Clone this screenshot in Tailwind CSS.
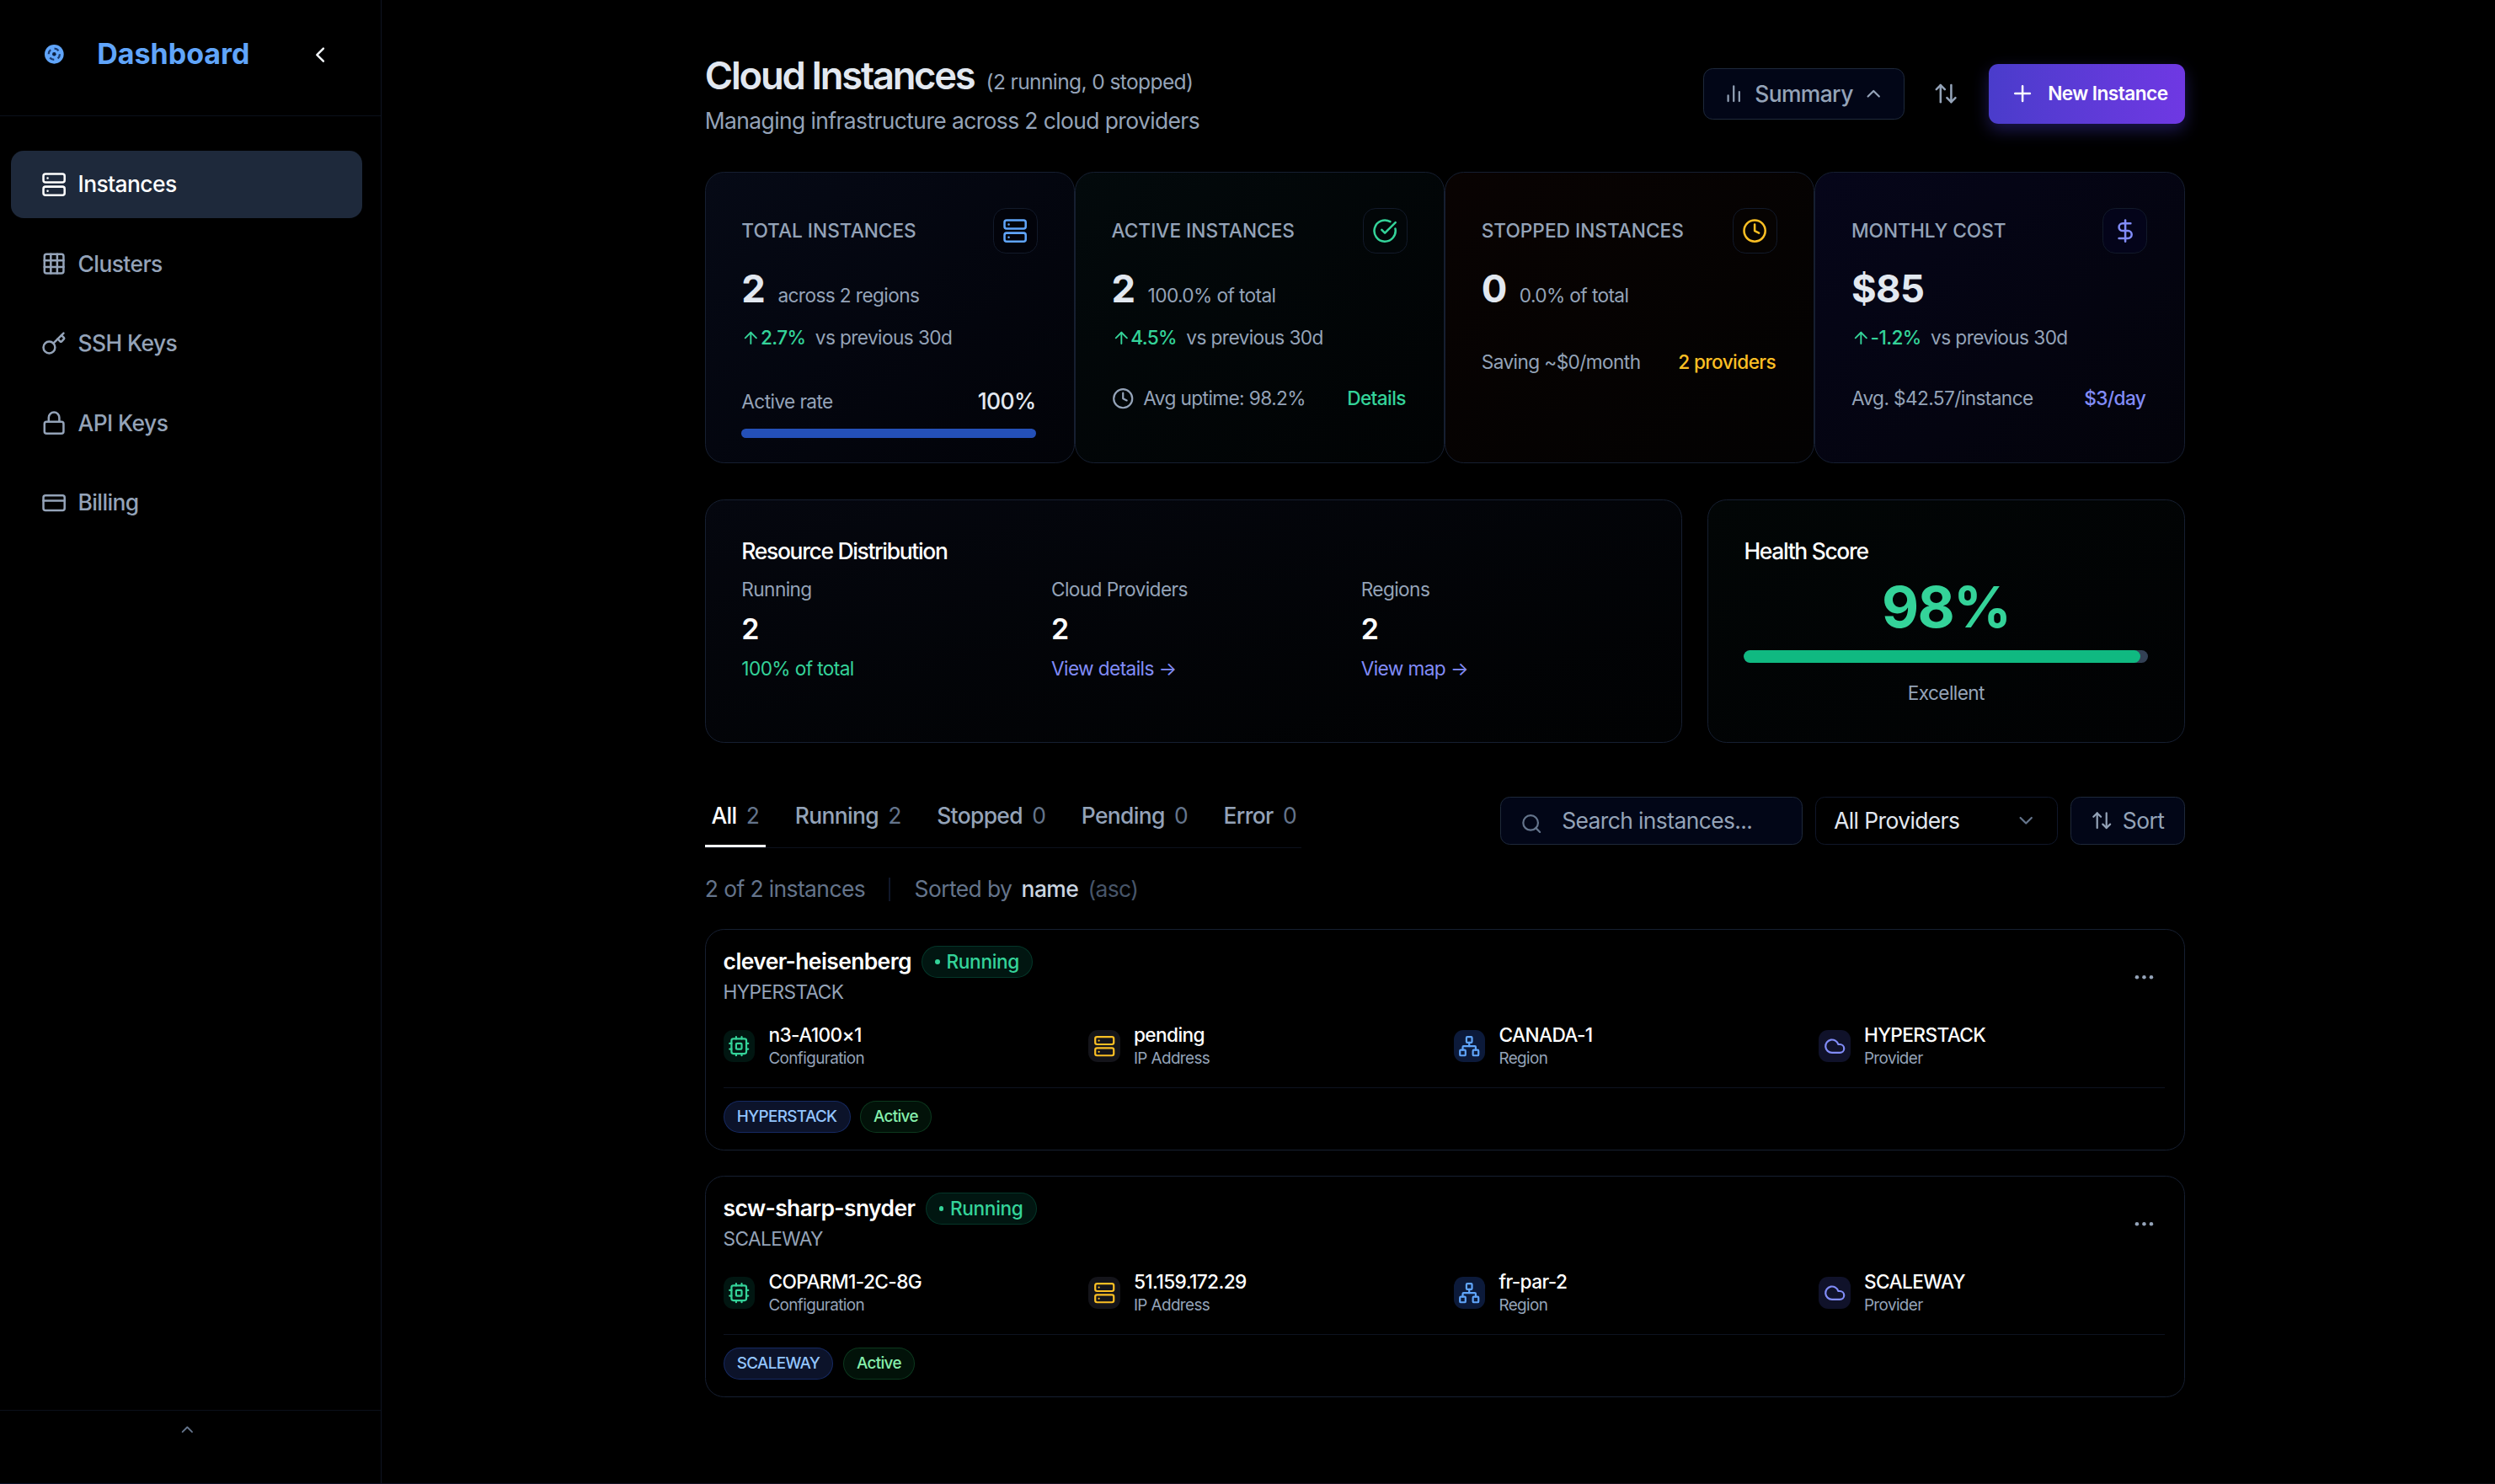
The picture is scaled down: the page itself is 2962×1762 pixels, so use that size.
<!DOCTYPE html>
<html lang="en">

<head>
    <meta charset="UTF-8">
    <title>Cloud Instances</title>
    <script src="https://cdn.jsdelivr.net/npm/@tailwindcss/browser@4"></script>
</head>

<body class="bg-black overflow-hidden">
    <!-- icon sprite -->
    <svg class="hidden">
        <defs>
            <symbol id="i-server" viewBox="0 0 24 24"><rect width="20" height="8" x="2" y="2" rx="2"/><rect width="20" height="8" x="2" y="14" rx="2"/><path d="M6 6h.01M6 18h.01"/></symbol>
            <symbol id="i-grid" viewBox="0 0 24 24"><rect width="18" height="18" x="3" y="3" rx="2"/><path d="M3 9h18M3 15h18M9 3v18M15 3v18"/></symbol>
            <symbol id="i-key" viewBox="0 0 24 24"><path d="m15.5 7.5 2.3 2.3a1 1 0 0 0 1.4 0l2.1-2.1a1 1 0 0 0 0-1.4L19 4"/><path d="m21 2-9.6 9.6"/><circle cx="7.5" cy="15.5" r="5.5"/></symbol>
            <symbol id="i-lock" viewBox="0 0 24 24"><rect width="18" height="11" x="3" y="11" rx="2"/><path d="M7 11V7a5 5 0 0 1 10 0v4"/></symbol>
            <symbol id="i-card" viewBox="0 0 24 24"><rect width="20" height="14" x="2" y="5" rx="2"/><path d="M2 10h20"/></symbol>
            <symbol id="i-check" viewBox="0 0 24 24"><path d="M21.801 10A10 10 0 1 1 17 3.335"/><path d="m9 11 3 3L22 4"/></symbol>
            <symbol id="i-clock" viewBox="0 0 24 24"><circle cx="12" cy="12" r="10"/><path d="M12 6v6l4 2"/></symbol>
            <symbol id="i-dollar" viewBox="0 0 24 24"><path d="M12 2v20"/><path d="M17 5H9.5a3.5 3.5 0 0 0 0 7h5a3.5 3.5 0 0 1 0 7H6"/></symbol>
            <symbol id="i-bars" viewBox="0 0 24 24"><path d="M18 20V10M12 20V4M6 20v-6"/></symbol>
            <symbol id="i-up" viewBox="0 0 24 24"><path d="m18 15-6-6-6 6"/></symbol>
            <symbol id="i-down" viewBox="0 0 24 24"><path d="m6 9 6 6 6-6"/></symbol>
            <symbol id="i-sort" viewBox="0 0 24 24"><path d="m21 16-4 4-4-4"/><path d="M17 20V4"/><path d="m3 8 4-4 4 4"/><path d="M7 4v16"/></symbol>
            <symbol id="i-plus" viewBox="0 0 24 24"><path d="M5 12h14M12 5v14"/></symbol>
            <symbol id="i-arrow" viewBox="0 0 24 24"><path d="m5 12 7-7 7 7"/><path d="M12 19V5"/></symbol>
            <symbol id="i-search" viewBox="0 0 24 24"><circle cx="11" cy="11" r="8"/><path d="m21 21-4.34-4.34"/></symbol>
            <symbol id="i-cpu" viewBox="0 0 24 24"><rect width="16" height="16" x="4" y="4" rx="2"/><rect width="6" height="6" x="9" y="9" rx="1"/><path d="M15 2v2M15 20v2M2 15h2M2 9h2M20 15h2M20 9h2M9 2v2M9 20v2"/></symbol>
            <symbol id="i-network" viewBox="0 0 24 24"><rect width="6" height="6" x="16" y="16" rx="1"/><rect width="6" height="6" x="2" y="16" rx="1"/><rect width="6" height="6" x="9" y="2" rx="1"/><path d="M5 16v-3a1 1 0 0 1 1-1h12a1 1 0 0 1 1 1v3"/><path d="M12 12V8"/></symbol>
            <symbol id="i-cloud" viewBox="0 0 24 24"><path d="M17.5 19H9a7 7 0 1 1 6.71-9h1.79a4.5 4.5 0 1 1 0 9Z"/></symbol>
        </defs>
    </svg>

    <div class="relative flex w-[1568px] h-[933px] [zoom:1.88903] font-[Inter,sans-serif] tracking-[-0.02em] text-white">

        <!-- sidebar -->
        <aside class="w-60 h-full shrink-0 flex flex-col border-r border-[#0f1522]">
            <div class="h-[73px] shrink-0 flex items-center pl-7 pr-[30px] pb-1 border-b border-[#0b101a]">
                <svg class="w-3 h-3 text-[#60a5fa]" viewBox="0 0 24 24" fill="currentColor" stroke="none"><circle cx="12" cy="12" r="12"/><circle cx="12" cy="12" r="7" fill="none" stroke="#1a3a6e" stroke-width="2.4" stroke-dasharray="6 5"/><circle cx="12" cy="12" r="2.4" fill="#0b1f40"/></svg>
                <span class="ml-[21px] text-lg font-bold tracking-normal text-[#60a5fa]">Dashboard</span>
                <svg class="ml-auto w-4 h-4 text-[#f1f5f9]" fill="none" stroke="currentColor" stroke-width="2" stroke-linecap="round" stroke-linejoin="round" viewBox="0 0 24 24"><path d="m15 18-6-6 6-6"/></svg>
            </div>

            <nav class="flex-1 pt-[22px] pl-[7px] pr-3 flex flex-col gap-2 text-sm font-medium text-[#94a3b8]">
                <a class="h-[42px] flex items-center gap-[7px] pl-[19px] rounded-lg bg-[#1e293b] text-white">
                    <svg class="w-4 h-4 fill-none stroke-current stroke-2 [stroke-linecap:round] [stroke-linejoin:round]"><use href="#i-server"/></svg>Instances
                </a>
                <a class="h-[42px] flex items-center gap-[7px] pl-[19px] rounded-lg">
                    <svg class="w-4 h-4 fill-none stroke-current stroke-2 [stroke-linecap:round] [stroke-linejoin:round]"><use href="#i-grid"/></svg>Clusters
                </a>
                <a class="h-[42px] flex items-center gap-[7px] pl-[19px] rounded-lg">
                    <svg class="w-4 h-4 fill-none stroke-current stroke-2 [stroke-linecap:round] [stroke-linejoin:round]"><use href="#i-key"/></svg>SSH Keys
                </a>
                <a class="h-[42px] flex items-center gap-[7px] pl-[19px] rounded-lg">
                    <svg class="w-4 h-4 fill-none stroke-current stroke-2 [stroke-linecap:round] [stroke-linejoin:round]"><use href="#i-lock"/></svg>API Keys
                </a>
                <a class="h-[42px] flex items-center gap-[7px] pl-[19px] rounded-lg">
                    <svg class="w-4 h-4 fill-none stroke-current stroke-2 [stroke-linecap:round] [stroke-linejoin:round]"><use href="#i-card"/></svg>Billing
                </a>
            </nav>

            <div class="h-[47px] shrink-0 flex justify-center pt-1.5 pr-1 border-t border-[#0b101a] text-[#64748b]">
                <svg class="w-3 h-3 fill-none stroke-current stroke-2 [stroke-linecap:round] [stroke-linejoin:round]"><use href="#i-up"/></svg>
            </div>
        </aside>

        <!-- main -->
        <main class="w-[930px] ml-[203px] pt-8">

            <header class="flex items-center justify-between">
                <div>
                    <div class="flex items-baseline gap-[7.5px]">
                        <h1 class="text-2xl font-semibold tracking-tighter text-[#e2e8f0]">Cloud Instances</h1>
                        <span class="text-[13px] tracking-tight text-[#94a3b8]">(2 running, 0 stopped)</span>
                    </div>
                    <p class="mt-0.5 text-sm text-[#94a3b8]">Managing infrastructure across 2 cloud providers</p>
                </div>
                <div class="flex items-center">
                    <button class="h-8 flex items-center gap-1.5 px-3 rounded-md border border-[#1e293b] bg-[#020617] text-sm font-medium text-[#94a3b8]">
                        <svg class="w-3.5 h-3.5 fill-none stroke-current stroke-2 [stroke-linecap:round] [stroke-linejoin:round]"><use href="#i-bars"/></svg>Summary
                        <svg class="w-3.5 h-3.5 fill-none stroke-current stroke-2 [stroke-linecap:round] [stroke-linejoin:round]"><use href="#i-up"/></svg>
                    </button>
                    <svg class="w-4 h-4 ml-[18px] mr-[19px] text-[#94a3b8] fill-none stroke-current stroke-2 [stroke-linecap:round] [stroke-linejoin:round]"><use href="#i-sort"/></svg>
                    <button class="w-[123px] h-[38px] flex items-center gap-2 pl-[13px] rounded-md bg-linear-to-r from-[#4a3ccb] to-[#6f38e3] shadow-[0_4px_10px_rgba(79,70,229,0.35)] text-xs font-semibold tracking-tight text-white">
                        <svg class="w-4 h-4 fill-none stroke-current stroke-2 [stroke-linecap:round] [stroke-linejoin:round]"><use href="#i-plus"/></svg>New Instance
                    </button>
                </div>
            </header>

            <!-- stat cards -->
            <section class="mt-[22px] grid grid-cols-4 h-[183px]">
                <div class="pt-[22px] pl-[22.5px] pr-6 rounded-xl border border-[#161f31] bg-linear-to-br from-[#060a16] to-[#020308]">
                    <div class="flex items-center justify-between">
                        <span class="text-xs font-medium uppercase tracking-normal text-[#94a3b8]">Total Instances</span>
                        <span class="w-[28px] h-[29px] -mr-px flex items-center justify-center rounded-lg border border-[#121a2a] bg-[#02030a] text-[#60a5fa]"><svg class="w-4 h-4 fill-none stroke-current stroke-2 [stroke-linecap:round] [stroke-linejoin:round]"><use href="#i-server"/></svg></span>
                    </div>
                    <div class="mt-1.5 flex items-baseline gap-2">
                        <span class="text-2xl font-bold text-[#e2e8f0]">2</span><span class="text-xs text-[#94a3b8]">across 2 regions</span>
                    </div>
                    <div class="mt-[7px] flex items-center text-xs">
                        <svg class="w-3 h-3 text-[#34d399] fill-none stroke-current stroke-2 [stroke-linecap:round] [stroke-linejoin:round]"><use href="#i-arrow"/></svg>
                        <span class="font-medium text-[#34d399]">2.7%</span><span class="ml-1.5 text-[#94a3b8]">vs previous 30d</span>
                    </div>
                    <div class="mt-[22px] flex items-center justify-between">
                        <span class="text-xs text-[#94a3b8]">Active rate</span><span class="text-sm font-medium text-[#e2e8f0]">100%</span>
                    </div>
                    <div class="mt-[7px] h-1.5 rounded-full bg-[#2450b8]"></div>
                </div>

                <div class="pt-[22px] pl-[22.5px] pr-6 rounded-xl border border-[#161f31] bg-linear-to-br from-[#030a0c] to-[#010304]">
                    <div class="flex items-center justify-between">
                        <span class="text-xs font-medium uppercase tracking-normal text-[#94a3b8]">Active Instances</span>
                        <span class="w-[28px] h-[29px] -mr-px flex items-center justify-center rounded-lg border border-[#121a2a] bg-[#020608] text-[#34d399]"><svg class="w-4 h-4 fill-none stroke-current stroke-2 [stroke-linecap:round] [stroke-linejoin:round]"><use href="#i-check"/></svg></span>
                    </div>
                    <div class="mt-1.5 flex items-baseline gap-2">
                        <span class="text-2xl font-bold text-[#e2e8f0]">2</span><span class="text-xs text-[#94a3b8]">100.0% of total</span>
                    </div>
                    <div class="mt-[7px] flex items-center text-xs">
                        <svg class="w-3 h-3 text-[#34d399] fill-none stroke-current stroke-2 [stroke-linecap:round] [stroke-linejoin:round]"><use href="#i-arrow"/></svg>
                        <span class="font-medium text-[#34d399]">4.5%</span><span class="ml-1.5 text-[#94a3b8]">vs previous 30d</span>
                    </div>
                    <div class="mt-[22px] flex items-center justify-between text-xs">
                        <span class="flex items-center gap-1.5 text-[#94a3b8]"><svg class="w-3.5 h-3.5 fill-none stroke-current stroke-2 [stroke-linecap:round] [stroke-linejoin:round]"><use href="#i-clock"/></svg>Avg uptime: 98.2%</span>
                        <span class="font-medium text-[#34d399]">Details</span>
                    </div>
                </div>

                <div class="pt-[22px] pl-[22.5px] pr-6 rounded-xl border border-[#161f31] bg-linear-to-br from-[#090302] to-[#030202]">
                    <div class="flex items-center justify-between">
                        <span class="text-xs font-medium uppercase tracking-normal text-[#94a3b8]">Stopped Instances</span>
                        <span class="w-[28px] h-[29px] -mr-px flex items-center justify-center rounded-lg border border-[#121a2a] bg-[#060302] text-[#fbbf24]"><svg class="w-4 h-4 fill-none stroke-current stroke-2 [stroke-linecap:round] [stroke-linejoin:round]"><use href="#i-clock"/></svg></span>
                    </div>
                    <div class="mt-1.5 flex items-baseline gap-2">
                        <span class="text-2xl font-bold text-[#e2e8f0]">0</span><span class="text-xs text-[#94a3b8]">0.0% of total</span>
                    </div>
                    <div class="mt-[22px] flex items-center justify-between text-xs">
                        <span class="text-[#94a3b8]">Saving ~$0/month</span>
                        <span class="font-medium text-[#fbbf24]">2 providers</span>
                    </div>
                </div>

                <div class="pt-[22px] pl-[22.5px] pr-6 rounded-xl border border-[#161f31] bg-linear-to-br from-[#06061a] to-[#03030a]">
                    <div class="flex items-center justify-between">
                        <span class="text-xs font-medium uppercase tracking-normal text-[#94a3b8]">Monthly Cost</span>
                        <span class="w-[28px] h-[29px] -mr-px flex items-center justify-center rounded-lg border border-[#121a2a] bg-[#04041a] text-[#818cf8]"><svg class="w-4 h-4 fill-none stroke-current stroke-2 [stroke-linecap:round] [stroke-linejoin:round]"><use href="#i-dollar"/></svg></span>
                    </div>
                    <div class="mt-1.5 flex items-baseline gap-2">
                        <span class="text-2xl font-bold text-[#e2e8f0]">$85</span>
                    </div>
                    <div class="mt-[7px] flex items-center text-xs">
                        <svg class="w-3 h-3 text-[#34d399] fill-none stroke-current stroke-2 [stroke-linecap:round] [stroke-linejoin:round]"><use href="#i-arrow"/></svg>
                        <span class="font-medium text-[#34d399]">-1.2%</span><span class="ml-1.5 text-[#94a3b8]">vs previous 30d</span>
                    </div>
                    <div class="mt-[22px] flex items-center justify-between text-xs">
                        <span class="text-[#94a3b8]">Avg. $42.57/instance</span>
                        <span class="font-medium text-[#818cf8]">$3/day</span>
                    </div>
                </div>
            </section>

            <!-- distribution and health -->
            <section class="mt-[23px] grid grid-cols-[614px_300px] gap-4 h-[153px]">
                <div class="pt-[22px] px-[22.5px] rounded-xl border border-[#161f31] bg-linear-to-br from-[#05070f] to-[#010203]">
                    <h3 class="text-sm font-medium tracking-tighter text-white">Resource Distribution</h3>
                    <div class="mt-1.5 grid grid-cols-3 gap-4">
                        <div>
                            <p class="text-xs text-[#94a3b8]">Running</p>
                            <p class="mt-[3px] text-lg font-semibold text-white">2</p>
                            <p class="mt-[3px] text-xs text-[#34d399]">100% of total</p>
                        </div>
                        <div>
                            <p class="text-xs text-[#94a3b8]">Cloud Providers</p>
                            <p class="mt-[3px] text-lg font-semibold text-white">2</p>
                            <p class="mt-[3px] text-xs text-[#818cf8]">View details →</p>
                        </div>
                        <div>
                            <p class="text-xs text-[#94a3b8]">Regions</p>
                            <p class="mt-[3px] text-lg font-semibold text-white">2</p>
                            <p class="mt-[3px] text-xs text-[#818cf8]">View map →</p>
                        </div>
                    </div>
                </div>
                <div class="pt-[22px] px-[22.5px] rounded-xl border border-[#161f31] bg-linear-to-br from-[#020606] to-[#010203]">
                    <h3 class="text-sm font-medium tracking-tighter text-white">Health Score</h3>
                    <p class="mt-[5px] text-4xl font-bold tracking-tight text-center text-[#34d399]">98%</p>
                    <div class="mt-[7px] h-2 rounded-full bg-[#334155] overflow-hidden">
                        <div class="w-[98%] h-full rounded-full bg-[#10b981]"></div>
                    </div>
                    <p class="mt-[11px] text-xs text-center text-[#94a3b8]">Excellent</p>
                </div>
            </section>

            <!-- tabs and filters -->
            <section class="mt-[33px] flex items-start justify-between">
                <div class="w-[375px] flex gap-[14.5px] pt-[3px] border-b border-[#0c111c] text-sm font-medium tracking-tight text-[#94a3b8]">
                    <button class="flex gap-1.5 px-1 pb-2 border-b-2 border-white text-white">All <span class="font-normal text-[#64748b]">2</span></button>
                    <button class="flex gap-1.5 px-1 pb-2">Running <span class="font-normal text-[#64748b]">2</span></button>
                    <button class="flex gap-1.5 px-1 pb-2">Stopped <span class="font-normal text-[#64748b]">0</span></button>
                    <button class="flex gap-1.5 px-1 pb-2">Pending <span class="font-normal text-[#64748b]">0</span></button>
                    <button class="flex gap-1.5 px-1 pb-2">Error <span class="font-normal text-[#64748b]">0</span></button>
                </div>
                <div class="mt-px flex gap-2 text-sm">
                    <div class="w-[190px] h-[30px] flex items-center pl-3 rounded-md border border-[#1e293b] bg-[#020617] text-[#94a3b8]">
                        <svg class="w-3.5 h-3.5 translate-y-0.5 text-[#64748b] fill-none stroke-current stroke-2 [stroke-linecap:round] [stroke-linejoin:round]"><use href="#i-search"/></svg>
                        <span class="ml-3">Search instances...</span>
                    </div>
                    <div class="w-[152px] h-[30px] flex items-center justify-between pl-[11px] pr-3 rounded-md border border-[#10172a] text-[#e2e8f0]">
                        All Providers
                        <svg class="w-3.5 h-3.5 text-[#64748b] fill-none stroke-current stroke-2 [stroke-linecap:round] [stroke-linejoin:round]"><use href="#i-down"/></svg>
                    </div>
                    <div class="w-[72px] h-[30px] flex items-center justify-center gap-1.5 rounded-md border border-[#1e293b] bg-[#020617] text-[#94a3b8]">
                        <svg class="w-3.5 h-3.5 fill-none stroke-current stroke-2 [stroke-linecap:round] [stroke-linejoin:round]"><use href="#i-sort"/></svg>Sort
                    </div>
                </div>
            </section>

            <div class="mt-4 flex items-center text-sm text-[#64748b]">
                <span>2 of 2 instances</span>
                <span class="w-px h-[15px] mx-[15px] bg-[#10172a]"></span>
                <span>Sorted by</span>
                <span class="ml-1.5 font-medium text-[#cbd5e1]">name</span>
                <span class="ml-1.5 text-[#475569]">(asc)</span>
            </div>

            <!-- instance list -->
            <section class="mt-[15px] flex flex-col gap-4">
                <article class="h-[139px] pt-[10px] pl-[11px] pr-3 rounded-xl border border-[#161f31]">
                    <div class="flex items-center justify-between">
                        <div>
                            <div class="flex items-center gap-[6.5px]">
                                <h4 class="text-sm font-semibold text-white">clever-heisenberg</h4>
                                <span class="h-5 flex items-center gap-1 px-2 rounded-full border border-[#064e3b]/60 bg-[#022c22]/50 text-xs font-medium tracking-[-0.015em] text-[#34d399]"><i class="w-[3px] h-[3px] rounded-full bg-[#34d399]"></i>Running</span>
                            </div>
                            <p class="mt-px text-xs text-[#94a3b8]">HYPERSTACK</p>
                        </div>
                        <svg class="w-7 h-3 px-2 -mr-px translate-y-px text-[#94a3b8]" viewBox="0 0 12 3" fill="currentColor"><circle cx="1.5" cy="1.5" r="1.2"/><circle cx="6" cy="1.5" r="1.2"/><circle cx="10.5" cy="1.5" r="1.2"/></svg>
                    </div>
                    <div class="mt-[11px] pb-[11px] grid grid-cols-4 gap-3 border-b border-[#0d1320]">
                        <div class="flex items-center gap-[8.5px]">
                            <span class="w-5 h-5 flex items-center justify-center rounded-md bg-[#022c22]/50 text-[#34d399]"><svg class="w-3.5 h-3.5 fill-none stroke-current stroke-2 [stroke-linecap:round] [stroke-linejoin:round]"><use href="#i-cpu"/></svg></span>
                            <div><p class="text-xs font-medium text-white">n3-A100×1</p><p class="text-[10px] leading-[14px] text-[#94a3b8]">Configuration</p></div>
                        </div>
                        <div class="flex items-center gap-[8.5px]">
                            <span class="w-5 h-5 flex items-center justify-center rounded-md bg-[#14141a] text-[#fbbf24]"><svg class="w-3.5 h-3.5 fill-none stroke-current stroke-2 [stroke-linecap:round] [stroke-linejoin:round]"><use href="#i-server"/></svg></span>
                            <div><p class="text-xs font-medium text-white">pending</p><p class="text-[10px] leading-[14px] text-[#94a3b8]">IP Address</p></div>
                        </div>
                        <div class="flex items-center gap-[8.5px]">
                            <span class="w-5 h-5 flex items-center justify-center rounded-md bg-[#0c1a3a] text-[#60a5fa]"><svg class="w-3.5 h-3.5 fill-none stroke-current stroke-2 [stroke-linecap:round] [stroke-linejoin:round]"><use href="#i-network"/></svg></span>
                            <div><p class="text-xs font-medium text-white">CANADA-1</p><p class="text-[10px] leading-[14px] text-[#94a3b8]">Region</p></div>
                        </div>
                        <div class="flex items-center gap-[8.5px]">
                            <span class="w-5 h-5 flex items-center justify-center rounded-md bg-[#10122a] text-[#818cf8]"><svg class="w-3.5 h-3.5 fill-none stroke-current stroke-2 [stroke-linecap:round] [stroke-linejoin:round]"><use href="#i-cloud"/></svg></span>
                            <div><p class="text-xs font-medium text-white">HYPERSTACK</p><p class="text-[10px] leading-[14px] text-[#94a3b8]">Provider</p></div>
                        </div>
                    </div>
                    <div class="pt-2 flex gap-1.5 text-[10px] font-medium tracking-[-0.035em]">
                        <span class="h-5 flex items-center px-2 rounded-full border border-[#1e3a8a]/60 bg-[#172554]/50 text-[#93c5fd]">HYPERSTACK</span>
                        <span class="h-5 flex items-center px-2 rounded-full border border-[#14532d]/60 bg-[#052e16]/40 text-[#86efac]">Active</span>
                    </div>
                </article>

                <article class="h-[139px] pt-[10px] pl-[11px] pr-3 rounded-xl border border-[#161f31]">
                    <div class="flex items-center justify-between">
                        <div>
                            <div class="flex items-center gap-[6.5px]">
                                <h4 class="text-sm font-semibold text-white">scw-sharp-snyder</h4>
                                <span class="h-5 flex items-center gap-1 px-2 rounded-full border border-[#064e3b]/60 bg-[#022c22]/50 text-xs font-medium tracking-[-0.015em] text-[#34d399]"><i class="w-[3px] h-[3px] rounded-full bg-[#34d399]"></i>Running</span>
                            </div>
                            <p class="mt-px text-xs text-[#94a3b8]">SCALEWAY</p>
                        </div>
                        <svg class="w-7 h-3 px-2 -mr-px translate-y-px text-[#94a3b8]" viewBox="0 0 12 3" fill="currentColor"><circle cx="1.5" cy="1.5" r="1.2"/><circle cx="6" cy="1.5" r="1.2"/><circle cx="10.5" cy="1.5" r="1.2"/></svg>
                    </div>
                    <div class="mt-[11px] pb-[11px] grid grid-cols-4 gap-3 border-b border-[#0d1320]">
                        <div class="flex items-center gap-[8.5px]">
                            <span class="w-5 h-5 flex items-center justify-center rounded-md bg-[#022c22]/50 text-[#34d399]"><svg class="w-3.5 h-3.5 fill-none stroke-current stroke-2 [stroke-linecap:round] [stroke-linejoin:round]"><use href="#i-cpu"/></svg></span>
                            <div><p class="text-xs font-medium text-white">COPARM1-2C-8G</p><p class="text-[10px] leading-[14px] text-[#94a3b8]">Configuration</p></div>
                        </div>
                        <div class="flex items-center gap-[8.5px]">
                            <span class="w-5 h-5 flex items-center justify-center rounded-md bg-[#14141a] text-[#fbbf24]"><svg class="w-3.5 h-3.5 fill-none stroke-current stroke-2 [stroke-linecap:round] [stroke-linejoin:round]"><use href="#i-server"/></svg></span>
                            <div><p class="text-xs font-medium text-white">51.159.172.29</p><p class="text-[10px] leading-[14px] text-[#94a3b8]">IP Address</p></div>
                        </div>
                        <div class="flex items-center gap-[8.5px]">
                            <span class="w-5 h-5 flex items-center justify-center rounded-md bg-[#0c1a3a] text-[#60a5fa]"><svg class="w-3.5 h-3.5 fill-none stroke-current stroke-2 [stroke-linecap:round] [stroke-linejoin:round]"><use href="#i-network"/></svg></span>
                            <div><p class="text-xs font-medium text-white">fr-par-2</p><p class="text-[10px] leading-[14px] text-[#94a3b8]">Region</p></div>
                        </div>
                        <div class="flex items-center gap-[8.5px]">
                            <span class="w-5 h-5 flex items-center justify-center rounded-md bg-[#10122a] text-[#818cf8]"><svg class="w-3.5 h-3.5 fill-none stroke-current stroke-2 [stroke-linecap:round] [stroke-linejoin:round]"><use href="#i-cloud"/></svg></span>
                            <div><p class="text-xs font-medium text-white">SCALEWAY</p><p class="text-[10px] leading-[14px] text-[#94a3b8]">Provider</p></div>
                        </div>
                    </div>
                    <div class="pt-2 flex gap-1.5 text-[10px] font-medium tracking-[-0.035em]">
                        <span class="h-5 flex items-center px-2 rounded-full border border-[#1e3a8a]/60 bg-[#172554]/50 text-[#93c5fd]">SCALEWAY</span>
                        <span class="h-5 flex items-center px-2 rounded-full border border-[#14532d]/60 bg-[#052e16]/40 text-[#86efac]">Active</span>
                    </div>
                </article>
            </section>
        </main>

        <!-- faint strip along the window's bottom edge -->
        <div class="absolute left-0 right-0 bottom-0 h-px bg-linear-to-r from-[#0b1226] via-[#1a1020] to-[#0b0b10]"></div>
    </div>
</body>

</html>
